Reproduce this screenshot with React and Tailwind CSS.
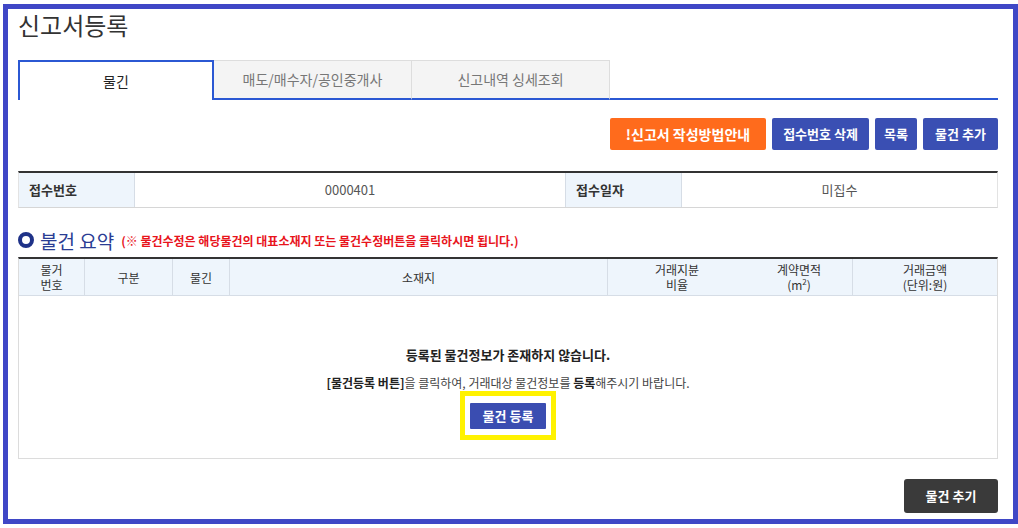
import React from 'react'

const FONT = { fontFamily: '"Noto Sans CJK KR", "Noto Sans", sans-serif' }

function Tabs() {
  return (
    <div className="flex h-[40px] mt-[19px]">
      <div className="w-[196px] bg-white border-t-2 border-x-2 border-[#2b58d3] flex items-center justify-center text-[14px] text-[#222]">
        물긴
      </div>
      <div className="w-[198px] bg-[#f4f4f4] border-t border-r border-[#dddddd] border-b-2 border-b-[#2b58d3] flex items-center justify-center text-[14px] text-[#777]">
        매도/매수자/공인중개사
      </div>
      <div className="w-[198px] bg-[#f4f4f4] border-t border-r border-[#dddddd] border-b-2 border-b-[#2b58d3] flex items-center justify-center text-[14px] text-[#777]">
        신고내역 싱세조회
      </div>
      <div className="flex-1 border-b-2 border-[#2b58d3]" />
    </div>
  )
}

function Actions() {
  return (
    <div className="flex justify-end gap-[6px] mt-[18px] h-[32px]">
      <button className="w-[156px] bg-[#ff6b1c] text-white font-bold text-[14px] rounded-[2px]">!신고서 작성방법안내</button>
      <button className="w-[97px] bg-[#3a4fb3] text-white font-bold text-[13px] rounded-[2px]">접수번호 삭제</button>
      <button className="w-[42px] bg-[#3a4fb3] text-white font-bold text-[13px] rounded-[2px]">목록</button>
      <button className="w-[75px] bg-[#3a4fb3] text-white font-bold text-[13px] rounded-[2px]">물건 추가</button>
    </div>
  )
}

function InfoTable() {
  return (
    <div className="mt-[21px] border-t-2 border-[#333] border-b border-x border-b-[#d6d6d6] border-x-[#e3e3e3] flex h-[37px] text-[13px]">
      <div className="w-[116px] bg-[#eef5fc] border-r border-[#d6dde6] flex items-center pl-[10px] font-bold text-[#333]">접수번호</div>
      <div className="w-[430px] flex items-center justify-center text-[#555]">0000401</div>
      <div className="w-[117px] bg-[#eef5fc] border-x border-[#d6dde6] flex items-center pl-[10px] font-bold text-[#333]">접수일자</div>
      <div className="flex-1 flex items-center justify-center text-[#555]">미집수</div>
    </div>
  )
}

function Heading() {
  return (
    <div className="mt-[18px] h-[28px] flex items-center gap-[6px]">
      <span className="w-[16px] h-[16px] rounded-full border-[4px] border-[#1f3288] shrink-0" />
      <span className="text-[19px] text-[#2a3d94] leading-none">불건 요약</span>
      <span className="text-[12px] font-bold text-[#e8141c] ml-[1px] mt-[2px]">(※ 물건수정은 해당물건의 대표소재지 또는 물건수정버튼을 클릭하시면 됩니다.)</span>
    </div>
  )
}

function MainTable() {
  const th = 'flex flex-col items-center justify-center text-center text-[12px] leading-[15px] text-[#333]'
  return (
    <div className="mt-[3px] border-t-2 border-[#333] border-x border-b border-[#dcdcdc] border-t-[#333]">
      <div className="flex h-[37px] bg-[#eef5fc] border-b border-[#d6dde6]">
        <div className={`${th} w-[66px] border-r border-[#d6dde6]`}><span>물거</span><span>번호</span></div>
        <div className={`${th} w-[88px] border-r border-[#d6dde6]`}>구분</div>
        <div className={`${th} w-[57px] border-r border-[#d6dde6]`}>물긴</div>
        <div className={`${th} w-[378px] border-r border-[#d6dde6]`}>소재지</div>
        <div className={`${th} w-[138px]`}><span>거래지뷴</span><span>비율</span></div>
        <div className={`${th} w-[107px] border-r border-[#d6dde6]`}>
          <span>계약면적</span>
          <span className="flex items-start">(m<span className="text-[8px] leading-[9px]">2</span>)</span>
        </div>
        <div className={`${th} flex-1`}><span>거래금액</span><span>(단위:원)</span></div>
      </div>
      <div className="h-[162px] flex flex-col items-center pt-[49px]">
        <p className="h-[20px] leading-[20px] text-[13px] font-bold text-[#222]">등록된 물건정보가 존재하지 않습니다.</p>
        <p className="h-[18px] leading-[18px] mt-[9px] text-[12px] text-[#444]">
          <b className="text-[#222]">[물건등록 버튼]</b>을 클릭하여, 거래대상 물건정보를 <b className="text-[#222]">등록</b>해주시기 바랍니다.
        </p>
        <div className="border-[5px] border-[#fff200] w-[96px] h-[49px] flex items-center justify-center -mt-[1px]">
          <button className="w-[76px] h-[26px] bg-[#3a4db1] text-white font-bold text-[13px] rounded-[1px]">물건 등록</button>
        </div>
      </div>
    </div>
  )
}

export default function App() {
  return (
    <div className="w-[1018px] h-[528px] bg-white pt-[4px] pl-[3px]" style={FONT}>
      <div className="w-[1015px] h-[520px] border-[5px] border-[#3f47c6] pl-[10px] pr-[15px]">
        <h1 className="h-[32px] leading-[32px] text-[24px] text-[#333]">신고서등록</h1>
        <Tabs />
        <Actions />
        <InfoTable />
        <Heading />
        <MainTable />
        <div className="flex justify-end mt-[20px]">
          <button className="w-[94px] h-[34px] bg-[#3a3a3a] text-white font-bold text-[13px] rounded-[3px]">물건 추기</button>
        </div>
      </div>
    </div>
  )
}
